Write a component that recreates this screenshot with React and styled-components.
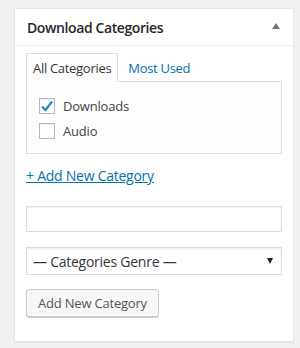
import React, { useState } from 'react';
import styled, { createGlobalStyle } from 'styled-components';

const GlobalStyle = createGlobalStyle`
  body {
    margin: 0;
    background: #f1f1f1;
    font-family: "Open Sans", "Noto Sans", sans-serif;
    color: #444;
  }
`;

const Page = styled.div`
  padding: 8px 6px 6px 14px;
`;

const Panel = styled.div`
  width: 280px;
  height: 334px;
  box-sizing: border-box;
  background: #fff;
  border: 1px solid #e5e5e5;
  box-shadow: 0 1px 1px rgba(0, 0, 0, 0.04);
`;

const Header = styled.div`
  height: 36px;
  display: flex;
  align-items: center;
  justify-content: space-between;
  padding: 0 13px 0 12px;
  border-bottom: 1px solid #eee;
`;

const Title = styled.h2`
  margin: 0;
  font-family: "Open Sans", sans-serif;
  font-size: 14px;
  font-weight: 600;
  letter-spacing: -0.4px;
  color: #23282d;
`;

const Toggle = styled.span`
  width: 0;
  height: 0;
  margin-top: -2px;
  border-left: 4px solid transparent;
  border-right: 4px solid transparent;
  border-bottom: 6px solid #72777c;
`;

const Body = styled.div`
  padding: 7px 11px 0 11px;
`;

const Tabs = styled.div`
  display: flex;
  height: 28px;
`;

const Tab = styled.button`
  font-family: inherit;
  font-size: 13px;
  letter-spacing: -0.3px;
  padding: 0 6px;
  margin: 0 3px -1px 0;
  height: 29px;
  box-sizing: border-box;
  background: ${p => (p.active ? '#fdfdfd' : 'transparent')};
  color: ${p => (p.active ? '#32373c' : '#0073aa')};
  border: 1px solid ${p => (p.active ? '#ddd' : 'transparent')};
  border-bottom: none;
  position: relative;
  z-index: 1;
  cursor: pointer;
`;

const Box = styled.div`
  height: 73px;
  box-sizing: border-box;
  border: 1px solid #ddd;
  background: #fdfdfd;
  padding: 16px 12px 0;
  display: flex;
  flex-direction: column;
  gap: 9px;
`;

const Item = styled.label`
  display: flex;
  align-items: center;
  gap: 8px;
  font-size: 13px;
  letter-spacing: -0.2px;
  color: #444;
  height: 16px;
`;

const Check = styled.span`
  width: 16px;
  height: 16px;
  box-sizing: border-box;
  border: 1px solid #b4b9be;
  background: #fff;
  box-shadow: inset 0 1px 2px rgba(0, 0, 0, 0.07);
  display: flex;
  align-items: center;
  justify-content: center;
`;

const AddLink = styled.a`
  display: block;
  width: fit-content;
  margin-top: 12px;
  font-size: 14px;
  letter-spacing: -0.25px;
  color: #0073aa;
  text-decoration: underline;
  line-height: 19px;
`;

const TextInput = styled.input`
  display: block;
  width: 100%;
  height: 26px;
  box-sizing: border-box;
  margin: 21px 0 0;
  border: 1px solid #ddd;
  box-shadow: inset 0 1px 2px rgba(0, 0, 0, 0.07);
  background: #fff;
  font-family: inherit;
`;

const Select = styled.div`
  margin-top: 15px;
  height: 28px;
  box-sizing: border-box;
  border: 1px solid #ddd;
  box-shadow: inset 0 1px 2px rgba(0, 0, 0, 0.07);
  background: #fff;
  display: flex;
  align-items: center;
  justify-content: space-between;
  padding: 0 8px 0 6px;
  font-size: 14px;
  letter-spacing: -0.25px;
  color: #32373c;
`;

const Caret = styled.span`
  width: 0;
  height: 0;
  border-left: 3.5px solid transparent;
  border-right: 3.5px solid transparent;
  border-top: 6px solid #222;
`;

const Button = styled.button`
  display: block;
  margin-top: 14px;
  height: 28px;
  padding: 0 11px;
  font-family: inherit;
  font-size: 13px;
  letter-spacing: -0.2px;
  color: #555;
  background: #f7f7f7;
  border: 1px solid #ccc;
  border-radius: 3px;
  box-shadow: 0 1px 0 #ccc;
  cursor: pointer;
`;

const categories = [
  { name: 'Downloads', checked: true },
  { name: 'Audio', checked: false },
];

export default function App() {
  const [tab, setTab] = useState('all');
  return (
    <Page>
      <GlobalStyle />
      <Panel>
        <Header>
          <Title>Download Categories</Title>
          <Toggle />
        </Header>
        <Body>
          <Tabs>
            <Tab active={tab === 'all'} onClick={() => setTab('all')}>All Categories</Tab>
            <Tab active={tab === 'most'} onClick={() => setTab('most')}>Most Used</Tab>
          </Tabs>
          <Box>
            {categories.map(c => (
              <Item key={c.name}>
                <Check>
                  {c.checked && (
                    <svg width="14" height="14" viewBox="0 0 14 14">
                      <path d="M2 7.5 L5.5 11 L12 2.5" fill="none" stroke="#1e8cbe" strokeWidth="2.2" />
                    </svg>
                  )}
                </Check>
                {c.name}
              </Item>
            ))}
          </Box>
          <AddLink href="#">+ Add New Category</AddLink>
          <TextInput type="text" />
          <Select>
            <span>— Categories Genre —</span>
            <Caret />
          </Select>
          <Button>Add New Category</Button>
        </Body>
      </Panel>
    </Page>
  );
}
